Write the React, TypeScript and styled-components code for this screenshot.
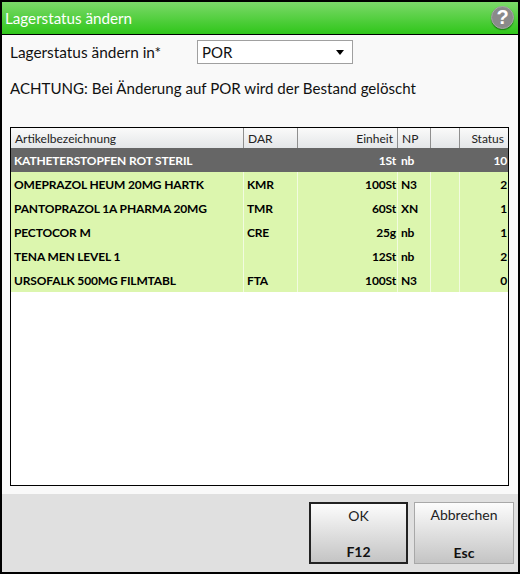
import { createGlobalStyle } from "styled-components";
import styled from "styled-components";

const GlobalStyle = createGlobalStyle`
  html, body {
    margin: 0;
    padding: 0;
    background: #000;
  }
`;

const Dialog = styled.div`
  box-sizing: border-box;
  width: 520px;
  height: 574px;
  border: 2px solid #000;
  display: flex;
  flex-direction: column;
  font-family: "Lato", "Open Sans", sans-serif;
  color: #111;
  overflow: hidden;
`;

const TitleBar = styled.div`
  flex: none;
  box-sizing: border-box;
  height: 33px;
  padding: 0 4px 1px 3px;
  display: flex;
  align-items: center;
  justify-content: space-between;
  background: linear-gradient(#7cd96a, #2fc61a);
  border-bottom: 1px solid #000;
  color: #fff;
  font-size: 15.2px;
`;

const HelpIcon = styled.div`
  width: 23px;
  height: 23px;
  border-radius: 50%;
  background: #8a8a8a;
  border: 1px solid #a8a8a8;
  box-shadow: 0 1px 1px rgba(0, 60, 0, 0.5);
  box-sizing: border-box;
  color: #fff;
  font-family: "Liberation Sans", sans-serif;
  font-weight: 700;
  font-size: 20px;
  line-height: 21px;
  text-align: center;
`;

const Content = styled.div`
  flex: 1;
  min-height: 0;
  background: #f9f9f9;
  padding: 5px 9px 8px 8px;
  display: flex;
  flex-direction: column;
`;

const FieldRow = styled.div`
  display: flex;
  align-items: center;
  height: 24px;
  font-size: 15.4px;
`;

const FieldLabel = styled.label`
  width: 187px;
  flex: none;
`;

const SelectBox = styled.div`
  box-sizing: border-box;
  width: 156px;
  height: 24px;
  background: #fff;
  border: 1px solid #a0a0a0;
  padding: 0 4px;
  display: flex;
  align-items: center;
  justify-content: space-between;
  font-size: 15px;
`;

const Caret = styled.span`
  width: 0;
  height: 0;
  margin-right: 4px;
  border-left: 4px solid transparent;
  border-right: 4px solid transparent;
  border-top: 5px solid #000;
`;

const Warning = styled.div`
  margin-top: 14px;
  height: 20px;
  line-height: 20px;
  font-size: 15.1px;
`;

const TableBox = styled.div`
  flex: 1;
  min-height: 0;
  margin-top: 29px;
  border: 1px solid #000;
  background: #fff;
`;

const COLUMNS = "233px 54px 100px 33px 29px 48px";

const HeaderRow = styled.div`
  display: grid;
  grid-template-columns: ${COLUMNS};
  height: 20px;
  background: linear-gradient(#fafafa, #e4e6e8);
  font-size: 12px;
  color: #222;
`;

const HeaderCell = styled.div<{ $right?: boolean }>`
  box-sizing: border-box;
  border-right: 1px solid #8f8f8f;
  padding: 0 4px;
  line-height: 21px;
  text-align: ${(p) => (p.$right ? "right" : "left")};
  &:last-child {
    border-right: none;
  }
`;

const Row = styled.div<{ $selected?: boolean }>`
  display: grid;
  grid-template-columns: ${COLUMNS};
  height: 24px;
  background: ${(p) => (p.$selected ? "#666666" : "#dcf6ae")};
  color: ${(p) => (p.$selected ? "#fff" : "#000")};
  font-size: 12px;
  letter-spacing: -0.15px;
  font-weight: 700;
`;

const Cell = styled.div<{ $right?: boolean; $selected?: boolean }>`
  box-sizing: border-box;
  border-right: 1px solid ${(p) => (p.$selected ? "#666666" : "#f2fbe0")};
  padding: 0 ${(p) => (p.$right ? "1px" : "3px")};
  line-height: 26px;
  white-space: nowrap;
  overflow: hidden;
  text-align: ${(p) => (p.$right ? "right" : "left")};
  &:last-child {
    border-right: none;
  }
`;

const Footer = styled.div`
  flex: none;
  box-sizing: border-box;
  height: 78px;
  background: #e0e0e0;
  padding: 8px 4px 8px 0;
  display: flex;
  justify-content: flex-end;
  align-items: flex-start;
  gap: 6px;
`;

const ActionButton = styled.button<{ $primary?: boolean }>`
  box-sizing: border-box;
  width: ${(p) => (p.$primary ? "99px" : "100px")};
  height: 62px;
  padding: 3px 0 2px;
  display: flex;
  flex-direction: column;
  align-items: center;
  justify-content: space-between;
  background: linear-gradient(#fcfcfc, #c4c4c4);
  border: ${(p) => (p.$primary ? "2px solid #222" : "1px solid #a8a8a8")};
  font-family: inherit;
  font-size: 14px;
  color: #222;
`;

const KeyHint = styled.span`
  font-size: 14px;
  font-weight: 700;
  color: #111;
`;

const rows = [
  { name: "KATHETERSTOPFEN ROT STERIL", dar: "", unit: "1St", np: "nb", status: "10", selected: true },
  { name: "OMEPRAZOL HEUM 20MG HARTK", dar: "KMR", unit: "100St", np: "N3", status: "2" },
  { name: "PANTOPRAZOL 1A PHARMA 20MG", dar: "TMR", unit: "60St", np: "XN", status: "1" },
  { name: "PECTOCOR M", dar: "CRE", unit: "25g", np: "nb", status: "1" },
  { name: "TENA MEN LEVEL 1", dar: "", unit: "12St", np: "nb", status: "2" },
  { name: "URSOFALK 500MG FILMTABL", dar: "FTA", unit: "100St", np: "N3", status: "0" },
];

const App = () => (
  <>
    <GlobalStyle />
    <Dialog>
      <TitleBar>
        <span>Lagerstatus ändern</span>
        <HelpIcon>?</HelpIcon>
      </TitleBar>
      <Content>
        <FieldRow>
          <FieldLabel>Lagerstatus ändern in*</FieldLabel>
          <SelectBox>
            POR
            <Caret />
          </SelectBox>
        </FieldRow>
        <Warning>ACHTUNG: Bei Änderung auf POR wird der Bestand gelöscht</Warning>
        <TableBox>
          <HeaderRow>
            <HeaderCell>Artikelbezeichnung</HeaderCell>
            <HeaderCell>DAR</HeaderCell>
            <HeaderCell $right>Einheit</HeaderCell>
            <HeaderCell>NP</HeaderCell>
            <HeaderCell />
            <HeaderCell $right>Status</HeaderCell>
          </HeaderRow>
          {rows.map((row) => (
            <Row key={row.name} $selected={row.selected}>
              <Cell $selected={row.selected}>{row.name}</Cell>
              <Cell $selected={row.selected}>{row.dar}</Cell>
              <Cell $selected={row.selected} $right>{row.unit}</Cell>
              <Cell $selected={row.selected}>{row.np}</Cell>
              <Cell $selected={row.selected} />
              <Cell $selected={row.selected} $right>{row.status}</Cell>
            </Row>
          ))}
        </TableBox>
      </Content>
      <Footer>
        <ActionButton $primary>
          OK
          <KeyHint>F12</KeyHint>
        </ActionButton>
        <ActionButton>
          Abbrechen
          <KeyHint>Esc</KeyHint>
        </ActionButton>
      </Footer>
    </Dialog>
  </>
);

export default App;
